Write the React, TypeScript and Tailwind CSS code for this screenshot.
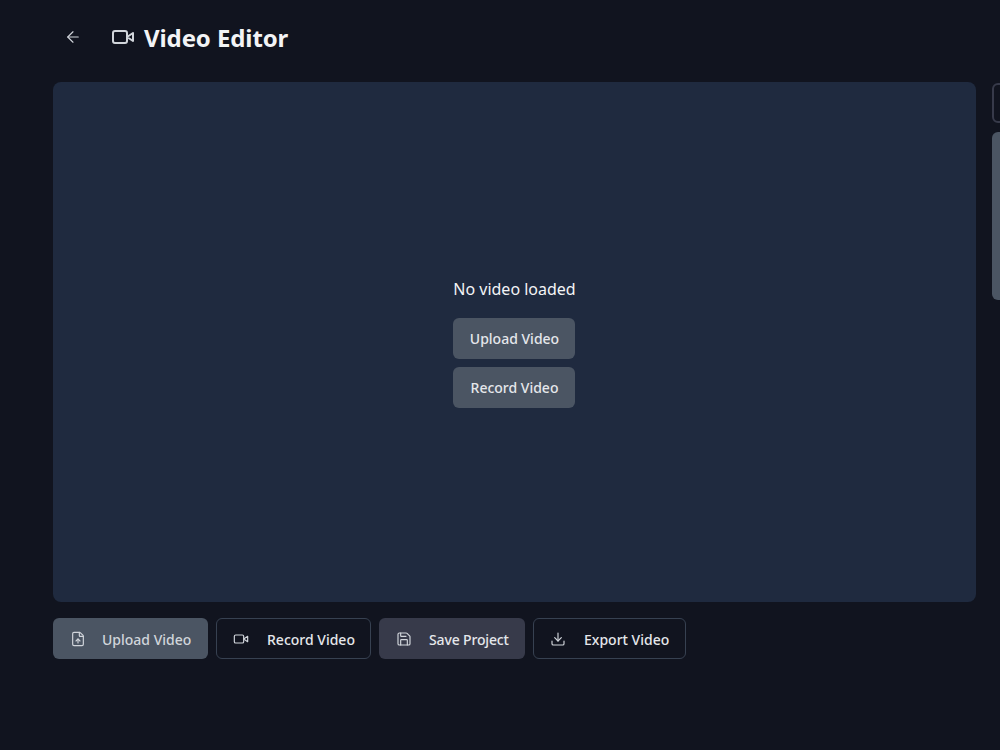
import { ArrowLeft, FileUp, Save, Download } from "lucide-react";

const font = "font-['Noto_Sans','Liberation_Sans',sans-serif]";

function VideoIcon({ size, className, sw = 2 }: { size: number; className?: string; sw?: number }) {
  return (
    <svg width={size} height={size} viewBox="0 0 24 24" fill="none" stroke="currentColor" strokeWidth={sw} strokeLinecap="round" strokeLinejoin="round" className={className}>
      <path d="m22 8-6 4 6 4V8Z" />
      <rect x="2" y="6" width="14" height="12" rx="2" ry="2" />
    </svg>
  );
}

export default function App() {
  return (
    <div className={`${font} h-[750px] w-[1000px] overflow-hidden bg-[#11141f] text-white`}>
      <header className="flex h-[82px] items-center pb-[6px] pl-[64px]">
        <button className="mb-[2px] flex h-[18px] w-[18px] items-center justify-center text-[#d1d5db]">
          <ArrowLeft size={18} strokeWidth={1.5} />
        </button>
        <VideoIcon size={24} className="mb-[2px] ml-[29px] text-[#d1d5db]" />
        <h1 className="ml-[9px] text-2xl font-bold leading-8 tracking-[-0.1px] text-[#f3f4f6]">Video Editor</h1>
      </header>
      <div className="flex w-[1100px] gap-4 pl-[53px]">
        <div className="w-[923px] shrink-0">
          <main className="flex h-[520px] flex-col items-center justify-center rounded-lg bg-[#1f2a3f]">
            <p className="mb-[17px] text-base leading-6 text-[#f3f4f6]">No video loaded</p>
            <div className="mr-[1px] flex w-[122px] flex-col items-stretch gap-2">
              <button className="h-[41px] rounded-md bg-[#4b5563] pl-[1px] pt-[2px] text-sm font-medium text-[#e5e7eb]">Upload Video</button>
              <button className="h-[41px] rounded-md bg-[#4b5563] pl-[1px] pt-[2px] text-sm font-medium text-[#e5e7eb]">Record Video</button>
            </div>
          </main>
          <div className="mt-4 flex gap-2">
            <button className="flex h-[41px] w-[155px] items-center gap-4 rounded-md bg-[#4b5563] pl-[17px] text-sm font-medium text-[#d1d5db]">
              <FileUp size={16} strokeWidth={1.75} /><span className="pt-[2px]">Upload Video</span>
            </button>
            <button className="flex h-[41px] w-[155px] items-center gap-[18px] rounded-md border border-[#374151] pl-4 text-sm font-medium text-[#e5e7eb]">
              <VideoIcon size={16} sw={1.75} className="text-[#d1d5db]" /><span className="pt-[2px]">Record Video</span>
            </button>
            <button className="flex h-[41px] w-[146px] items-center gap-[17px] rounded-md bg-[#373a4a] pl-[17px] text-sm font-medium tracking-[-0.15px] text-[#e5e7eb]">
              <Save size={16} strokeWidth={1.75} className="text-[#d1d5db]" /><span className="pt-[2px]">Save Project</span>
            </button>
            <button className="flex h-[41px] w-[153px] items-center gap-[18px] rounded-md border border-[#374151] pl-4 text-sm font-medium text-[#e5e7eb]">
              <Download size={16} strokeWidth={1.75} className="text-[#d1d5db]" /><span className="pt-[2px]">Export Video</span>
            </button>
          </div>
        </div>
        <aside className="w-[80px] shrink-0 pt-[1px]">
          <div className="h-[40px] rounded-md border-2 border-[#373a4a]"></div>
          <div className="mt-[9px] h-[168px] rounded-md bg-[#4b5563]"></div>
        </aside>
      </div>
    </div>
  );
}
